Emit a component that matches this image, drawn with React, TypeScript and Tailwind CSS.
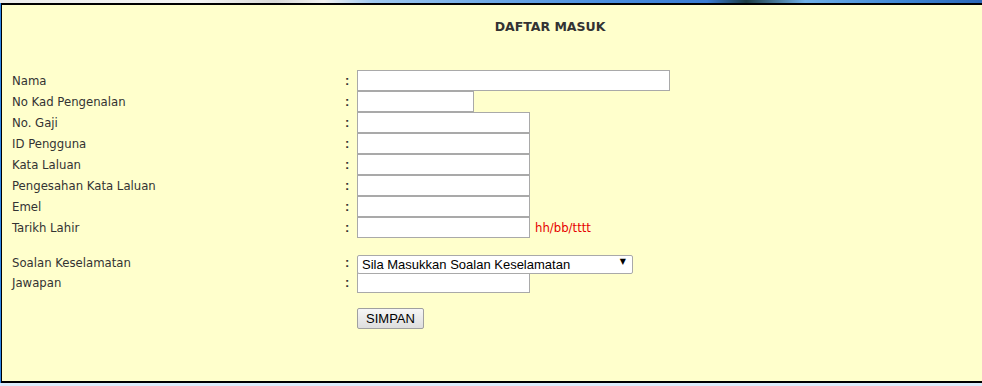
import React from "react";

const label = "text-[13px] text-[#333333] [font-family:'DejaVu_Sans_Condensed','DejaVu_Sans',sans-serif] [font-stretch:condensed]";

function Row({ name, width, hint }: { name: string; width: string; hint?: string }) {
  return (
    <div className="flex h-[21px] items-center">
      <div className={`w-[330px] ${label}`}>{name}</div>
      <div className="w-[15px] pl-[3px] text-[13px] font-bold leading-none text-[#333333] [font-family:'Liberation_Sans',sans-serif]">:</div>
      <input type="text" className={`h-[21px] ${width} border border-[#a9a9a9] bg-white`} />
      {hint && <span className={`ml-[5px] text-[13px] text-[#e60000] [font-family:'DejaVu_Sans_Condensed','DejaVu_Sans',sans-serif] [font-stretch:condensed]`}>{hint}</span>}
    </div>
  );
}

export default function App() {
  return (
    <div className="h-[386px] w-[982px] overflow-hidden bg-[#dcecfb]">
      {/* banner strip */}
      <div className="h-[3px] bg-[linear-gradient(90deg,#ececec_0%,#f4f4f4_20%,#d8d8d8_28%,#f0f0f0_33%,#9fc8f0_38%,#6ea8e6_50%,#4a8ee0_62%,#3a7bd4_72%,#1d3c44_76%,#6fb0ea_82%,#3f86d6_92%,#2a66b8_100%)]" />
      <div className="flex">
        <div className="w-px bg-[#2f86e6]" />
        <div className="h-[380px] flex-1 border-y-2 border-l border-black bg-[#ffffcc] pl-[10px]">
          <div className="pl-[106px] pt-[14px] text-center text-[12.5px] font-bold leading-[16px] text-[#333333] [font-family:'DejaVu_Sans',sans-serif]">
            DAFTAR MASUK
          </div>

          <div className="mt-[35px]">
            <Row name="Nama" width="w-[313px]" />
            <Row name="No Kad Pengenalan" width="w-[117px]" />
            <Row name="No. Gaji" width="w-[173px]" />
            <Row name="ID Pengguna" width="w-[173px]" />
            <Row name="Kata Laluan" width="w-[173px]" />
            <Row name="Pengesahan Kata Laluan" width="w-[173px]" />
            <Row name="Emel" width="w-[173px]" />
            <Row name="Tarikh Lahir" width="w-[173px]" hint="hh/bb/tttt" />
          </div>

          <div className="mt-[15px] flex h-[19px] items-center">
            <div className={`w-[330px] ${label}`}>Soalan Keselamatan</div>
            <div className="w-[15px] pl-[3px] text-[13px] font-bold leading-none text-[#333333] [font-family:'Liberation_Sans',sans-serif]">:</div>
            <div className="relative">
              <select className="h-[19px] w-[276px] appearance-none rounded-[2px] border border-[#a9a9a9] bg-white pl-[4px] text-[13px] leading-[17px] text-black [font-family:'Liberation_Sans',sans-serif]">
                <option>Sila Masukkan Soalan Keselamatan</option>
              </select>
              <span className="pointer-events-none absolute right-[7px] top-[4px] text-[8px] leading-[13px] text-black [font-family:'DejaVu_Sans',sans-serif]">▼</span>
            </div>
          </div>
          <Row name="Jawapan" width="w-[173px]" />

          <div className="mt-[15px] flex">
            <div className="w-[345px]" />
            <button className="h-[21px] w-[67px] rounded-[2px] border border-[#a0a0a0] bg-[linear-gradient(#f6f6f6,#dedede)] text-[13px] leading-none text-black [font-family:'Liberation_Sans',sans-serif]">
              SIMPAN
            </button>
          </div>
        </div>
      </div>
    </div>
  );
}
